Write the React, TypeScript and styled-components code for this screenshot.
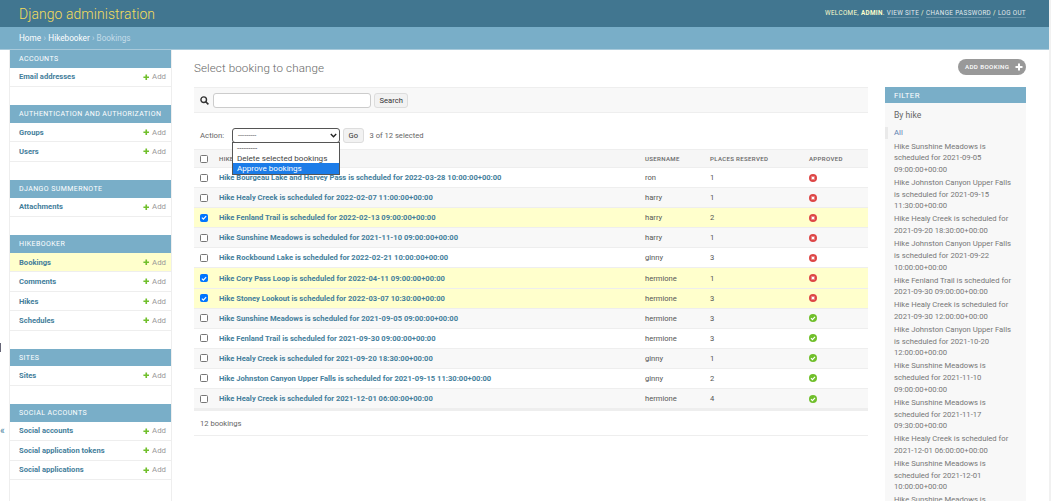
import React from "react";
import styled, { createGlobalStyle } from "styled-components";

const Global = createGlobalStyle`
  html, body { margin: 0; padding: 0; height: 501px; overflow: hidden; background: #fff; }
  body { font-family: Roboto, "Liberation Sans", sans-serif; font-size: 8px; color: #333; }
  * { box-sizing: border-box; }
`;

const Page = styled.div`width: 1051px; height: 501px; overflow: hidden; position: relative; display: flex; flex-direction: column; border-right: 2px solid #f1f1f1;`;
const Header = styled.header`height: 27px; flex: none; background: #417690; display: flex; align-items: center; justify-content: space-between; padding: 0 23px 0 19px;`;
const Brand = styled.h1`margin: 0; font-size: 13.9px; font-weight: 300; color: #f5dd5d; letter-spacing: .1px;`;
const Tools = styled.div`font-size: 6.3px; letter-spacing: .36px; text-transform: uppercase; color: #ffc; margin-bottom: 2px; strong { font-weight: 700; } a { color: #fff; opacity: .85; border-bottom: 1px solid rgba(255,255,255,.25); }`;
const Crumbs = styled.div`height: 23px; flex: none; background: #79aec8; border-bottom: 1px solid #a9cadb; padding: 0 19px; display: flex; align-items: center; gap: 2.4px; color: #c4dce8; font-size: 8.2px; a { color: #fff; }`;
const Body = styled.div`flex: 1; display: flex; align-items: stretch; min-height: 0;`;
const Toggle = styled.div`width: 9px; flex: none; position: relative; color: #447e9b; font-size: 10px; span { position: absolute; top: 375px; left: 0; } i { position: absolute; top: 293px; left: 0; width: 1px; height: 9px; background: #667; }`;
const Side = styled.nav`width: 163px; flex: none; border-left: 1px solid #eee; border-right: 1px solid #eee; display: flex; flex-direction: column; gap: 18px;`;
const Module = styled.section``;
const ModuleHead = styled.h2`margin: 0; height: 17.7px; background: #79aec8; color: #fff; font-size: 7px; font-weight: 400; letter-spacing: .42px; white-space: nowrap; text-transform: uppercase; display: flex; align-items: center; padding-left: 9px;`;
const ModuleRow = styled.div<{ $on?: boolean }>`height: 19.5px; display: flex; align-items: center; justify-content: space-between; padding: 0 5px 0 9px; border-bottom: 1px solid #eee; background: ${p => p.$on ? "#ffc" : "transparent"}; b { color: #447e9b; font-size: 7.6px; font-weight: 700; }`;
const AddLink = styled.span`display: inline-flex; align-items: center; gap: 3px; color: #999; font-size: 7.8px;`;
const Content = styled.main`flex: 1; min-width: 0; padding: 0 23px 0 22px; display: flex; flex-direction: column;`;
const TitleRow = styled.div`height: 37px; display: flex; align-items: flex-end; justify-content: space-between; position: relative;`;
const Title = styled.h1`margin: 0 0 12px; font-size: 11.6px; font-weight: 300; color: #666; letter-spacing: .1px;`;
const AddBtn = styled.span`position: absolute; right: 0; top: 9px; height: 15.5px; width: 68px; border-radius: 8px; background: #999; color: #fff; font-size: 6.2px; font-weight: 500; letter-spacing: .36px; display: flex; align-items: center; justify-content: space-between; padding: 0 3px 0 7px; text-transform: uppercase; white-space: nowrap;`;
const Columns = styled.div`flex: 1; display: flex; gap: 17px; min-height: 0;`;
const Changes = styled.div`width: 674px; flex: none;`;
const SearchBar = styled.div`height: 26px; background: #f8f8f8; border-top: 1px solid #eee; border-bottom: 1px solid #eee; display: flex; align-items: center; padding-left: 6px; gap: 4px;`;
const SearchInput = styled.div`width: 158px; height: 15px; background: #fff; border: 1px solid #ccc; border-radius: 3px; margin-right: -1px;`;
const Btn = styled.span`height: 15px; border-radius: 3px; background: #f2f2f2; border: 1px solid #ddd; color: #333; font-size: 7.6px; display: inline-flex; align-items: center; padding: 0 4.5px;`;
const Actions = styled.div`height: 36px; display: flex; align-items: center; padding: 8px 0 0 6px; font-size: 7.8px; color: #666; position: relative;`;
const ActionLabel = styled.span`width: 32px; flex: none;`;
const SelectBox = styled.div`width: 108px; height: 15px; background: #fff; border: 1px solid #555; border-radius: 3px; display: flex; align-items: center; justify-content: space-between; padding: 0 2px 0 5px; margin-right: 3px; color: #555; font-size: 7.4px;`;
const Selected = styled.span`margin-left: 6px; font-size: 7.6px; color: #666;`;
const Menu = styled.div`position: absolute; left: 38px; top: 28.5px; width: 108px; height: 33px; background: #fff; border: 1px solid #555; z-index: 2; font-size: 8.1px; color: #333; display: flex; flex-direction: column;`;
const MenuItem = styled.div<{ $on?: boolean }>`line-height: 10.4px; padding-left: 4px; flex: 1; white-space: nowrap; color: ${p => p.$on ? "#fff" : "#444"}; background: ${p => p.$on ? "#1c7ce8" : "transparent"};`;
const Table = styled.div`display: flex; flex-direction: column; border-bottom: 2px solid #eee;`;
const gridCols = "19px 426px 65px 99px 1fr";
const HeadRow = styled.div`height: 19px; background: #f6f6f6; border-top: 1px solid #eee; border-bottom: 1px solid #eee; display: grid; grid-template-columns: ${gridCols}; align-items: center; padding-left: 6px; font-size: 6.1px; font-weight: 500; color: #666; letter-spacing: .32px; text-transform: uppercase;`;
const Row = styled.div<{ $tone: "plain" | "alt" | "sel" }>`height: 20.1px; background: ${p => p.$tone === "sel" ? "#ffc" : p.$tone === "alt" ? "#f8f8f8" : "#fff"}; border-bottom: 1px solid #eee; display: grid; grid-template-columns: ${gridCols}; align-items: center; padding-left: 6px; color: #555; font-size: 7.6px; b { color: #447e9b; font-size: 7.6px; font-weight: 700; white-space: nowrap; }`;
const Check = styled.span<{ $on?: boolean }>`width: 8px; height: 8px; border-radius: 1.5px; display: inline-flex; align-items: center; justify-content: center; background: ${p => p.$on ? "#0075ff" : "#fff"}; border: 1px solid ${p => p.$on ? "#0075ff" : "#767676"};`;
const StatusCell = styled.span`display: flex; align-items: center;`;
const Paginator = styled.div`height: 25px; border-bottom: 1px solid #eee; display: flex; align-items: center; padding-left: 6px; color: #666; font-size: 7.6px;`;
const Filter = styled.aside`width: 141px; flex: none; background: #f8f8f8; color: #666; font-size: 7.7px; overflow: hidden;`;
const FilterHead = styled.h2`margin: 0; height: 16px; background: #79aec8; color: #fff; font-size: 7.8px; font-weight: 400; letter-spacing: .4px; display: flex; align-items: center; padding-left: 9px; text-transform: uppercase;`;
const FilterBy = styled.h3`margin: 0; padding: 7px 9px 7px; font-size: 8.6px; font-weight: 400; color: #666;`;
const FilterList = styled.ul`list-style: none; margin: 0; padding: 0;`;
const FilterItem = styled.li<{ $on?: boolean }>`padding: 0 12px 0 6px; margin-bottom: ${p => p.$on ? "1.8px" : "1.2px"}; line-height: 11.75px; color: ${p => p.$on ? "#5b80b2" : "#777"}; border-left: 3px solid ${p => p.$on ? "#eaeaea" : "transparent"};`;

const Plus = ({ c = "#70bf2b", s = 6.5 }: { c?: string; s?: number }) => (
  <svg width={s} height={s} viewBox="0 0 8 8"><path d="M3 .5h2V3h2.5v2H5v2.5H3V5H.5V3H3z" fill={c} /></svg>
);
const Yes = () => (
  <svg width="8" height="8" viewBox="0 0 8 8"><circle cx="4" cy="4" r="4" fill="#70bf2b" /><path d="M2 4.2l1.4 1.4L6 2.9" stroke="#fff" strokeWidth="1.2" fill="none" /></svg>
);
const No = () => (
  <svg width="8" height="8" viewBox="0 0 8 8"><circle cx="4" cy="4" r="4" fill="#dd4646" /><path d="M2.6 2.6l2.8 2.8M5.4 2.6L2.6 5.4" stroke="#fff" strokeWidth="1.3" fill="none" /></svg>
);

const modules: { name: string; rows: string[]; on?: string }[] = [
  { name: "Accounts", rows: ["Email addresses"] },
  { name: "Authentication and Authorization", rows: ["Groups", "Users"] },
  { name: "Django Summernote", rows: ["Attachments"] },
  { name: "Hikebooker", rows: ["Bookings", "Comments", "Hikes", "Schedules"], on: "Bookings" },
  { name: "Sites", rows: ["Sites"] },
  { name: "Social Accounts", rows: ["Social accounts", "Social application tokens", "Social applications"] },
];

const bookings: [string, string, number, boolean, boolean][] = [
  ["Hike Bourgeau Lake and Harvey Pass is scheduled for 2022-03-28 10:00:00+00:00", "ron", 1, false, false],
  ["Hike Healy Creek is scheduled for 2022-02-07 11:00:00+00:00", "harry", 1, false, false],
  ["Hike Fenland Trail is scheduled for 2022-02-13 09:00:00+00:00", "harry", 2, false, true],
  ["Hike Sunshine Meadows is scheduled for 2021-11-10 09:00:00+00:00", "harry", 1, false, false],
  ["Hike Rockbound Lake is scheduled for 2022-02-21 10:00:00+00:00", "ginny", 3, false, false],
  ["Hike Cory Pass Loop is scheduled for 2022-04-11 09:00:00+00:00", "hermione", 1, false, true],
  ["Hike Stoney Lookout is scheduled for 2022-03-07 10:30:00+00:00", "hermione", 3, false, true],
  ["Hike Sunshine Meadows is scheduled for 2021-09-05 09:00:00+00:00", "hermione", 3, true, false],
  ["Hike Fenland Trail is scheduled for 2021-09-30 09:00:00+00:00", "hermione", 3, true, false],
  ["Hike Healy Creek is scheduled for 2021-09-20 18:30:00+00:00", "ginny", 1, true, false],
  ["Hike Johnston Canyon Upper Falls is scheduled for 2021-09-15 11:30:00+00:00", "ginny", 2, true, false],
  ["Hike Healy Creek is scheduled for 2021-12-01 06:00:00+00:00", "hermione", 4, true, false],
];

const filters = [
  "Hike Sunshine Meadows is scheduled for 2021-09-05 09:00:00+00:00",
  "Hike Johnston Canyon Upper Falls is scheduled for 2021-09-15 11:30:00+00:00",
  "Hike Healy Creek is scheduled for 2021-09-20 18:30:00+00:00",
  "Hike Johnston Canyon Upper Falls is scheduled for 2021-09-22 10:00:00+00:00",
  "Hike Fenland Trail is scheduled for 2021-09-30 09:00:00+00:00",
  "Hike Healy Creek is scheduled for 2021-09-30 12:00:00+00:00",
  "Hike Johnston Canyon Upper Falls is scheduled for 2021-10-20 12:00:00+00:00",
  "Hike Sunshine Meadows is scheduled for 2021-11-10 09:00:00+00:00",
  "Hike Sunshine Meadows is scheduled for 2021-11-17 09:30:00+00:00",
  "Hike Healy Creek is scheduled for 2021-12-01 06:00:00+00:00",
  "Hike Sunshine Meadows is scheduled for 2021-12-01 10:00:00+00:00",
  "Hike Sunshine Meadows is scheduled for 2021-12-15 09:00:00+00:00",
];

export default function App() {
  return (
    <Page>
      <Global />
      <Header>
        <Brand>Django administration</Brand>
        <Tools>Welcome, <strong>admin</strong>. <a>View site</a> / <a>Change password</a> / <a>Log out</a></Tools>
      </Header>
      <Crumbs><a>Home</a> › <a>Hikebooker</a> › Bookings</Crumbs>
      <Body>
        <Toggle><i /><span>«</span></Toggle>
        <Side>
          {modules.map(m => (
            <Module key={m.name}>
              <ModuleHead>{m.name}</ModuleHead>
              {m.rows.map(r => (
                <ModuleRow key={r} $on={m.on === r}>
                  <b>{r}</b>
                  <AddLink><Plus /> Add</AddLink>
                </ModuleRow>
              ))}
            </Module>
          ))}
        </Side>
        <Content>
          <TitleRow>
            <Title>Select booking to change</Title>
            <AddBtn>Add booking <Plus c="#fff" s={8} /></AddBtn>
          </TitleRow>
          <Columns>
            <Changes>
              <SearchBar>
                <svg width="9" height="9" viewBox="0 0 9 9"><circle cx="3.7" cy="3.7" r="2.8" fill="none" stroke="#333" strokeWidth="1.4" /><path d="M5.8 5.8L8.4 8.4" stroke="#333" strokeWidth="1.6" /></svg>
                <SearchInput />
                <Btn>Search</Btn>
              </SearchBar>
              <Actions>
                <ActionLabel>Action:</ActionLabel>
                <SelectBox>---------
                  <svg width="7" height="5" viewBox="0 0 7 5"><path d="M.8 1l2.7 2.7L6.2 1" fill="none" stroke="#222" strokeWidth="1.4" /></svg>
                </SelectBox>
                <Btn>Go</Btn>
                <Selected>3 of 12 selected</Selected>
                <Menu>
                  <MenuItem>---------</MenuItem>
                  <MenuItem>Delete selected bookings</MenuItem>
                  <MenuItem $on>Approve bookings</MenuItem>
                </Menu>
              </Actions>
              <Table>
                <HeadRow>
                  <Check />
                  <span>Hike</span>
                  <span>Username</span>
                  <span>Places reserved</span>
                  <span>Approved</span>
                </HeadRow>
                {bookings.map(([t, u, n, ok, sel], i) => (
                  <Row key={i} $tone={sel ? "sel" : i % 2 ? "alt" : "plain"}>
                    <Check $on={sel}>
                      {sel && <svg width="7" height="7" viewBox="0 0 7 7"><path d="M1 3.6l1.8 1.8L6 1.8" fill="none" stroke="#fff" strokeWidth="1.3" /></svg>}
                    </Check>
                    <b>{t}</b>
                    <span>{u}</span>
                    <span>{n}</span>
                    <StatusCell>{ok ? <Yes /> : <No />}</StatusCell>
                  </Row>
                ))}
              </Table>
              <Paginator>12 bookings</Paginator>
            </Changes>
            <Filter>
              <FilterHead>Filter</FilterHead>
              <FilterBy>By hike</FilterBy>
              <FilterList>
                <FilterItem $on>All</FilterItem>
                {filters.map((f, i) => <FilterItem key={i}>{f}</FilterItem>)}
              </FilterList>
            </Filter>
          </Columns>
        </Content>
      </Body>
    </Page>
  );
}
